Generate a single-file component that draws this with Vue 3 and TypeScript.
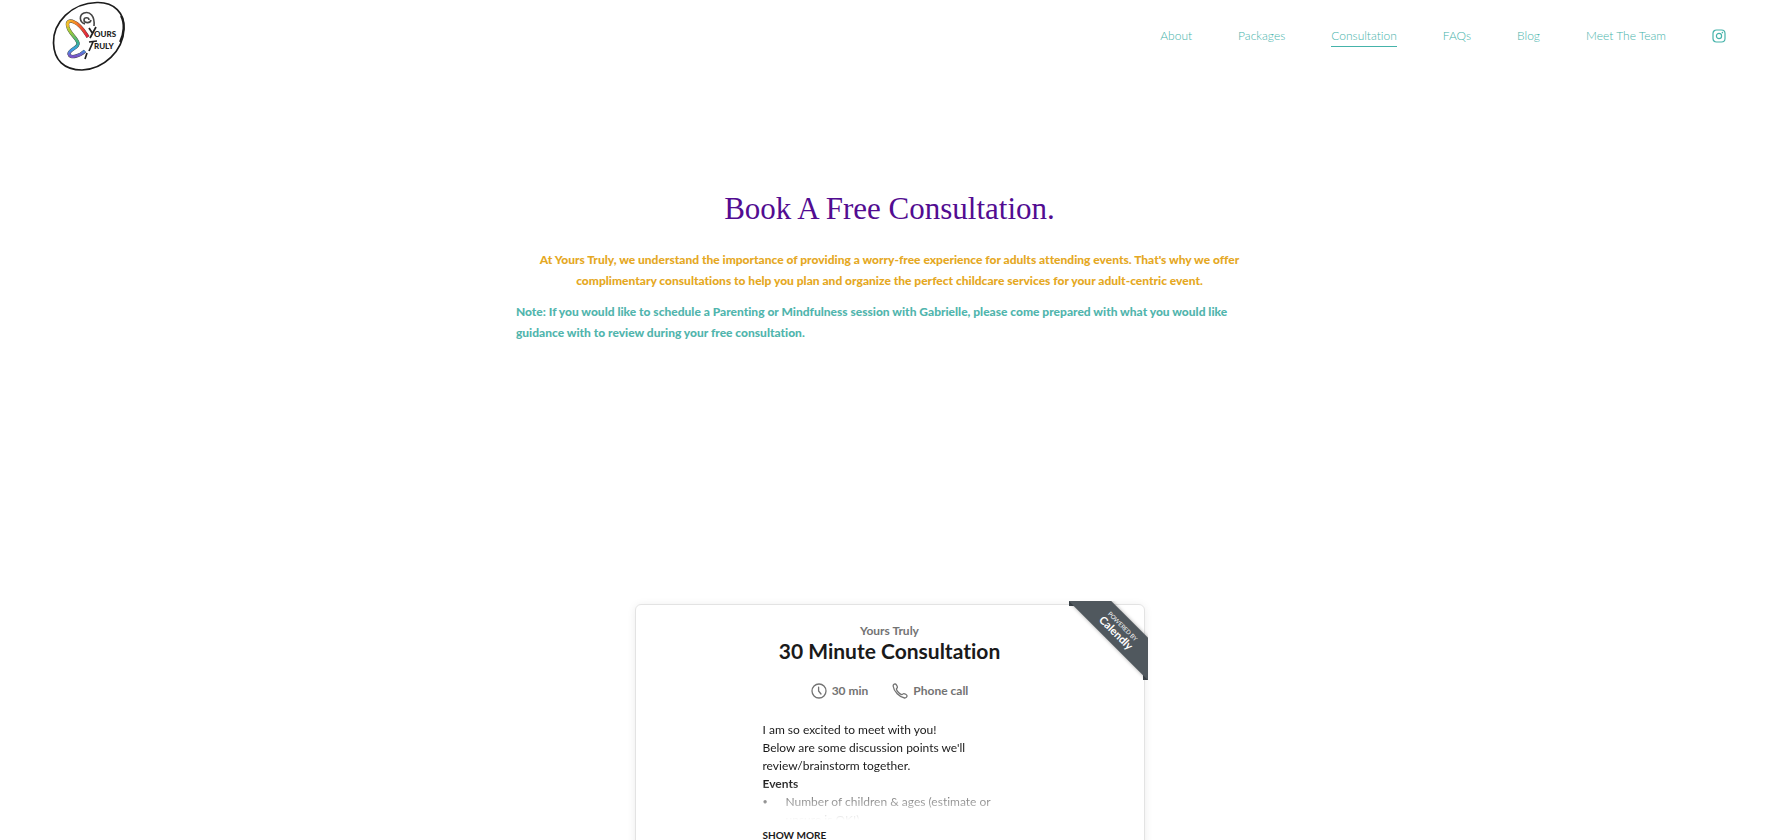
<script setup lang="ts">
interface NavItem {
  label: string
  href: string
  current?: boolean
}

const navItems: NavItem[] = [
  { label: 'About', href: '#about' },
  { label: 'Packages', href: '#packages' },
  { label: 'Consultation', href: '#consultation', current: true },
  { label: 'FAQs', href: '#faqs' },
  { label: 'Blog', href: '#blog' },
  { label: 'Meet The Team', href: '#team' },
]
</script>

<template>
  <div class="page">
    <header class="site-header">
      <a class="logo" href="#home" aria-label="Yours Truly">
        <svg viewBox="0 0 76 72" width="76" height="72">
          <defs>
            <linearGradient id="cool" x1="0" y1="22" x2="0" y2="56" gradientUnits="userSpaceOnUse">
              <stop offset="0" stop-color="#f2c52c" />
              <stop offset="0.3" stop-color="#9ccc3c" />
              <stop offset="0.6" stop-color="#35b08c" />
              <stop offset="0.8" stop-color="#3aa0e6" />
              <stop offset="1" stop-color="#7a55c8" />
            </linearGradient>
            <linearGradient id="warm" x1="16" y1="0" x2="36" y2="0" gradientUnits="userSpaceOnUse">
              <stop offset="0" stop-color="#f2c52c" />
              <stop offset="0.4" stop-color="#f58a28" />
              <stop offset="1" stop-color="#e2243c" />
            </linearGradient>
          </defs>
          <path d="M2.5 43C2 23 20 3 46 2.5C63 2 74 13 73 29C72 51 53 69 31 70C13 70 3 60 2.5 43Z" fill="#fff" stroke="#1c1c1c" stroke-width="1.7" />
          <path d="M70 16C74 23 73 34 69 42" fill="none" stroke="#1c1c1c" stroke-width="2" />
          <g fill="none" stroke-width="3.4" stroke="#444">
            <path d="M17 27C15 21 19 20 23 22C30 25 33 31 37 37" />
            <path d="M17 27C18 33 26 38 27 43C28 48 18 49 18 54C19 59 29 56 34 51" />
          </g>
          <g fill="none" stroke-width="2.7">
            <path d="M17 27C15 21 19 20 23 22C30 25 33 31 37 37" stroke="url(#warm)" />
            <path d="M17 27C18 33 26 38 27 43C28 48 18 49 18 54C19 59 29 56 34 51" stroke="url(#cool)" />
          </g>
          <path d="M34 24C28 22 28 15 33 13C39 11 44 16 43 26M38 20C38 17 33 17 33 20C33 23 39 24 40 20" fill="none" stroke="#444" stroke-width="1.6" />
          <path d="M38 28L42 34M45 27L39 38M38 42L46 41M42 42L38 51M36 53L34 59" fill="none" stroke="#222" stroke-width="1.7" />
          <text x="43" y="37" class="logo-text">OURS</text>
          <text x="43" y="49" class="logo-text">RULY</text>
        </svg>
      </a>
      <nav class="nav" aria-label="Main">
        <a
          v-for="item in navItems"
          :key="item.label"
          :href="item.href"
          class="nav-link"
          :class="{ current: item.current }"
          :aria-current="item.current ? 'page' : undefined"
        >{{ item.label }}</a>
        <a class="social" href="#instagram" aria-label="Instagram">
          <svg viewBox="0 0 14 14" width="14" height="14" fill="none" stroke="#45b3aa">
            <rect x="1" y="1" width="12" height="12" rx="3.5" stroke-width="1.2" />
            <circle cx="7" cy="7" r="2.6" stroke-width="1.2" />
            <circle cx="10.4" cy="3.6" r="0.8" fill="#45b3aa" stroke="none" />
          </svg>
        </a>
      </nav>
    </header>

    <main class="main">
      <section class="intro">
        <h1>Book A Free Consultation.</h1>
        <p class="lead">
          At Yours Truly, we understand the importance of providing a worry-free experience for adults attending events. That's why we offer<br />
          complimentary consultations to help you plan and organize the perfect childcare services for your adult-centric event.
        </p>
        <p class="note">
          Note: If you would like to schedule a Parenting or Mindfulness session with Gabrielle, please come prepared with what you would like<br />
          guidance with to review during your free consultation.
        </p>
      </section>

      <section class="booking">
        <a class="ribbon" href="#calendly" aria-label="Powered by Calendly">
          <span class="ribbon-band">
            <span class="ribbon-small">POWERED BY</span>
            <span class="ribbon-name">Calendly</span>
          </span>
        </a>
        <div class="owner">Yours Truly</div>
        <h2>30 Minute Consultation</h2>
        <ul class="facts">
          <li>
            <svg viewBox="0 0 16 16" width="16" height="16" fill="none" stroke="#737373" stroke-width="1.3" stroke-linecap="round">
              <circle cx="8" cy="8" r="7" />
              <path d="M7.6 4.2V8L10 11" />
            </svg>
            30 min
          </li>
          <li>
            <svg viewBox="0 0 16 16" width="16" height="16" fill="none" stroke="#737373" stroke-width="1.3" stroke-linejoin="round">
              <path d="M1.2 3.2C.9 2 2.2.8 3.3 1C4.2 1.2 5.4 3.2 5.4 4.2C5.4 5.2 4.2 5.4 4.4 6.3C5 8.3 7.7 11 9.7 11.6C10.6 11.8 10.8 10.6 11.8 10.6C12.8 10.6 14.8 11.8 15 12.7C15.2 13.9 13.8 15.2 12.6 15C7.5 14.3 1.8 8.5 1.2 3.2Z" />
            </svg>
            Phone call
          </li>
        </ul>
        <div class="details">
          <div class="excerpt">
            <p>I am so excited to meet with you!<br />Below are some discussion points we'll<br />review/brainstorm together.</p>
            <p><strong>Events</strong></p>
            <ul>
              <li>Number of children &amp; ages (estimate or<br />unsure is OK!)</li>
            </ul>
          </div>
          <button type="button" class="more">SHOW MORE</button>
        </div>
      </section>
    </main>
  </div>
</template>

<style>
body {
  margin: 0;
  background: #fff;
}
</style>

<style scoped>
.page {
  display: flex;
  flex-direction: column;
  height: 100vh;
  overflow: hidden;
  font-family: Lato, "Liberation Sans", sans-serif;
  font-variant-ligatures: none;
}

.site-header {
  display: flex;
  flex: none;
  align-items: center;
  justify-content: space-between;
  padding: 0 53px 0 51px;
}

.logo {
  display: block;
  height: 72px;
}

.logo-text {
  font: 900 8px Lato, sans-serif;
  fill: #222;
}

.nav {
  display: flex;
  align-items: center;
  gap: 46px;
}

.nav-link {
  padding: 2px 0;
  border-bottom: 1px solid transparent;
  color: #45b3aa;
  font-size: 12px;
  font-weight: 300;
  line-height: 16px;
  text-decoration: none;
}

.nav-link.current {
  border-color: #45b3aa;
}

.social {
  display: flex;
}

.main {
  display: flex;
  flex: 1;
  flex-direction: column;
  align-items: center;
  min-height: 0;
}

.intro {
  width: 42%;
  min-width: 746px;
  padding-top: 116px;
}

h1 {
  margin: 0 0 20px;
  color: #520c91;
  font-family: "Liberation Serif", serif;
  font-size: 31px;
  font-weight: 400;
  line-height: 41px;
  text-align: center;
}

.intro p {
  margin: 0 0 10px;
  font-size: 12px;
  font-weight: 900;
  line-height: 21px;
  white-space: nowrap;
}

.intro .lead {
  color: #e5a823;
  text-align: center;
}

.intro .note {
  color: #51b5ad;
}

.booking {
  position: relative;
  box-sizing: border-box;
  width: 510px;
  flex: none;
  min-height: 400px;
  margin-top: 251px;
  padding-top: 17px;
  border: 1px solid #e3e3e3;
  border-radius: 6px;
  box-shadow: 0 1px 8px rgba(0, 0, 0, 0.08);
  color: #1a1a1a;
}

.ribbon {
  position: absolute;
  top: -4px;
  right: -4px;
  width: 79px;
  height: 79px;
  overflow: hidden;
  color: #fff;
  text-decoration: none;
}

.ribbon::before,
.ribbon::after {
  position: absolute;
  width: 5px;
  height: 5px;
  background: #3f474d;
  content: "";
}

.ribbon::before {
  top: 0;
  left: 0;
}

.ribbon::after {
  right: 0;
  bottom: 0;
}

.ribbon-band {
  position: absolute;
  top: 14px;
  left: -15px;
  z-index: 1;
  box-sizing: border-box;
  width: 130px;
  height: 30px;
  padding-top: 6px;
  background: #50585e;
  box-shadow: 0 0 4px rgba(0, 0, 0, 0.35);
  text-align: center;
  transform: rotate(45deg);
}

.ribbon-small,
.ribbon-name {
  display: block;
}

.ribbon-small {
  font-size: 6px;
  line-height: 7px;
}

.ribbon-name {
  font-size: 11px;
  font-weight: 700;
  line-height: 12px;
}

.owner {
  color: #737373;
  font-size: 12px;
  font-weight: 700;
  line-height: 18px;
  text-align: center;
}

h2 {
  margin: 0;
  font-size: 21px;
  font-weight: 700;
  line-height: 22px;
  text-align: center;
}

.facts {
  display: flex;
  justify-content: center;
  gap: 24px;
  margin: 20px 0 0;
  padding: 0;
  color: #737373;
  font-size: 12px;
  font-weight: 700;
  line-height: 18px;
  list-style: none;
}

.facts li {
  display: flex;
  align-items: center;
  gap: 5px;
}

.details {
  width: 254px;
  margin: 21px auto 0;
  font-size: 12px;
  line-height: 18px;
}

.excerpt {
  height: 99px;
  overflow: hidden;
  mask-image: linear-gradient(#000 60px, transparent 99px);
}

.excerpt p {
  margin: 0;
}

.excerpt ul {
  margin: 0;
  padding-left: 23px;
  list-style: none;
}

.excerpt li::before {
  float: left;
  width: 23px;
  margin-left: -23px;
  content: "•";
  font-size: 9px;
}

.more {
  display: block;
  margin-top: 6px;
  padding: 0;
  border: 0;
  background: none;
  color: #1a1a1a;
  font-family: inherit;
  font-size: 10px;
  font-weight: 700;
  line-height: 18px;
}
</style>
